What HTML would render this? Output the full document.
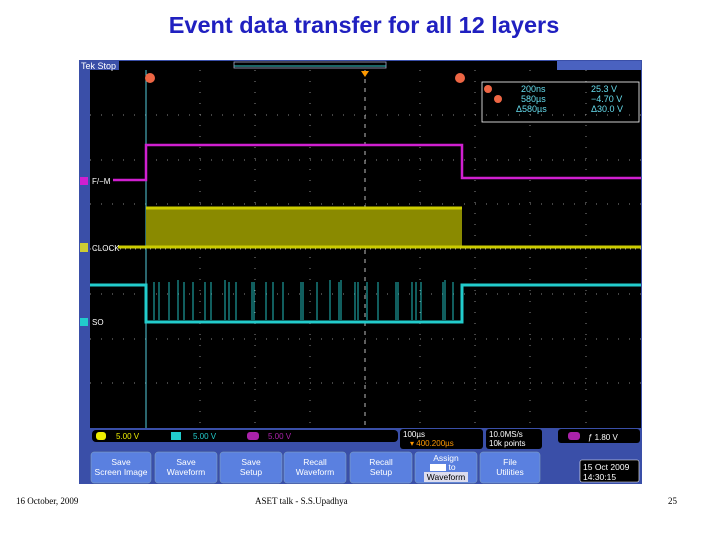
<!DOCTYPE html>
<html><head><style>
body{margin:0;width:720px;height:540px;background:#fff;position:relative;overflow:hidden;font-family:"Liberation Sans",sans-serif}
.t{position:absolute;top:12px;left:0;width:728px;text-align:center;color:#2020c0;font-size:23.5px;font-weight:bold}
.f{position:absolute;top:496px;font-family:"Liberation Serif",serif;font-size:9px;color:#000}
</style></head><body>
<div class="t">Event data transfer for all 12 layers</div>
<svg style="position:absolute;left:0;top:0" width="720" height="540" font-family="Liberation Sans" >
<rect x="79" y="60" width="563" height="424" fill="#3a4fa8"/>
<rect x="90" y="70" width="551" height="358" fill="#000"/>
<rect x="90" y="61" width="551" height="9" fill="#000"/>
<rect x="557" y="61" width="84" height="9" fill="#4a62c0"/>
<rect x="79" y="61" width="40" height="9" fill="#3a4fa8"/>
<text x="81" y="69" font-size="9" fill="#fff">Tek Stop</text>
<rect x="234" y="62" width="152" height="6" fill="none" stroke="#aac" stroke-width="0.8"/>
<line x1="234" y1="66" x2="386" y2="66" stroke="#3cc" />
<g stroke="#888" stroke-width="1" stroke-dasharray="1 10">
<line x1="90" y1="115" x2="641" y2="115"/><line x1="90" y1="160" x2="641" y2="160"/><line x1="90" y1="204" x2="641" y2="204"/><line x1="90" y1="294" x2="641" y2="294"/><line x1="90" y1="339" x2="641" y2="339"/><line x1="90" y1="383" x2="641" y2="383"/>
<line x1="200" y1="70" x2="200" y2="428"/><line x1="255" y1="70" x2="255" y2="428"/><line x1="310" y1="70" x2="310" y2="428"/><line x1="420" y1="70" x2="420" y2="428"/><line x1="475" y1="70" x2="475" y2="428"/><line x1="530" y1="70" x2="530" y2="428"/><line x1="586" y1="70" x2="586" y2="428"/>
</g>
<line x1="90" y1="249" x2="641" y2="249" stroke="#999" stroke-dasharray="1 4"/>
<line x1="365" y1="70" x2="365" y2="428" stroke="#bbb" stroke-dasharray="4 5"/>
<polygon points="361,71 369,71 365,77" fill="#f90"/>
<line x1="146" y1="70" x2="146" y2="428" stroke="#5cd" stroke-width="1"/>
<circle cx="150" cy="78" r="5" fill="#e64"/><circle cx="460" cy="78" r="5" fill="#e64"/>
<rect x="482" y="82" width="157" height="40" fill="none" stroke="#fff" stroke-width="0.8"/>
<g font-size="9" fill="#6de">
<circle cx="488" cy="89" r="4" fill="#e64"/><circle cx="498" cy="99" r="4" fill="#e64"/>
<text x="521" y="92">200ns</text><text x="591" y="92">25.3 V</text>
<text x="521" y="102">580µs</text><text x="591" y="102">−4.70 V</text>
<text x="516" y="112">Δ580µs</text><text x="591" y="112">Δ30.0 V</text></g>
<polyline points="113,180 146,180 146,145 462,145 462,178 641,178" fill="none" stroke="#d020d0" stroke-width="2.5"/>
<rect x="80" y="177" width="8" height="8" fill="#d020d0"/>
<text x="92" y="184" font-size="8" fill="#fff">F/−M</text>
<rect x="146" y="207" width="316" height="41" fill="#8a8a00"/>
<line x1="146" y1="208" x2="462" y2="208" stroke="#cc0" stroke-width="3"/>
<line x1="118" y1="247" x2="641" y2="247" stroke="#cc0" stroke-width="3"/>
<rect x="80" y="243" width="8" height="9" fill="#cc3" />
<text x="92" y="251" font-size="8" fill="#fff">CLOCK</text>
<polyline points="90,285 146,285 146,322 462,322 462,285 641,285" fill="none" stroke="#2cc" stroke-width="3"/>
<g stroke="#2bb" stroke-width="1">
<path d="M154 282V320M159 282V320M169 282V320M178 280V320M184 282V320M193 282V320M205 282V320M211 282V320M225 280V320M229 282V320M236 282V320M252 282V320M254 282V320M266 282V320M273 282V320M283 282V320M301 282V320M303 282V320M317 282V320M330 280V320M339 282V320M341 280V320M355 282V320M358 282V320M367 282V320M378 282V320M396 282V320M398 282V320M412 282V320M416 282V320M421 282V320M443 282V320M445 280V320M453 282V320"/></g>
<rect x="80" y="318" width="8" height="8" fill="#2cc"/>
<text x="92" y="325" font-size="8" fill="#fff">SO</text>
<rect x="79" y="428" width="563" height="56" fill="#3a4fa8"/>
<rect x="92" y="430" width="306" height="12" rx="4" fill="#000"/>
<g font-size="8">
<rect x="96" y="432" width="10" height="8" rx="3" fill="#ee0"/><text x="116" y="439" fill="#ee0">5.00 V</text>
<rect x="171" y="432" width="10" height="8" fill="#2cc"/><text x="193" y="439" fill="#2cc">5.00 V</text>
<rect x="247" y="432" width="12" height="8" rx="3" fill="#a2a"/><text x="268" y="439" fill="#a2a">5.00 V</text>
<rect x="400" y="429" width="83" height="20" rx="3" fill="#000"/><text x="403" y="437" fill="#fff">100µs</text><text x="410" y="446" fill="#f90">▾ 400.200µs</text>
<rect x="486" y="429" width="56" height="20" rx="3" fill="#000"/><text x="489" y="437" fill="#fff">10.0MS/s</text><text x="489" y="446" fill="#fff">10k points</text>
<rect x="558" y="429" width="82" height="14" rx="3" fill="#000"/><rect x="568" y="432" width="12" height="8" rx="3" fill="#a2a"/><text x="588" y="440" fill="#fff">ƒ    1.80 V</text>
</g>
<g fill="#5a80e0" stroke="#8ab" stroke-width="0.5">
<rect x="91" y="452" width="60" height="31" rx="3"/><rect x="155" y="452" width="62" height="31" rx="3"/><rect x="220" y="452" width="62" height="31" rx="3"/><rect x="284" y="452" width="62" height="31" rx="3"/><rect x="350" y="452" width="62" height="31" rx="3"/><rect x="415" y="452" width="62" height="31" rx="3"/><rect x="480" y="452" width="60" height="31" rx="3"/></g>
<g font-size="8.5" fill="#fff" text-anchor="middle">
<text x="121" y="465">Save</text><text x="121" y="475">Screen Image</text>
<text x="186" y="465">Save</text><text x="186" y="475">Waveform</text>
<text x="251" y="465">Save</text><text x="251" y="475">Setup</text>
<text x="315" y="465">Recall</text><text x="315" y="475">Waveform</text>
<text x="381" y="465">Recall</text><text x="381" y="475">Setup</text>
<text x="446" y="461">Assign</text><text x="452" y="470">to</text>
<rect x="424" y="472" width="44" height="10" fill="#dde"/><text x="446" y="480" fill="#000">Waveform</text>
<text x="510" y="465">File</text><text x="510" y="475">Utilities</text></g>
<rect x="430" y="464" width="16" height="7" fill="#fff"/>
<rect x="580" y="460" width="59" height="22" rx="2" fill="#000" stroke="#fff" stroke-width="0.6"/>
<text x="583" y="470" font-size="8.5" fill="#fff">15 Oct 2009</text><text x="583" y="480" font-size="8.5" fill="#fff">14:30:15</text>
</svg>
<div class="f" style="left:16px">16 October, 2009</div>
<div class="f" style="left:255px">ASET talk - S.S.Upadhya</div>
<div class="f" style="left:668px">25</div>
</body></html>
